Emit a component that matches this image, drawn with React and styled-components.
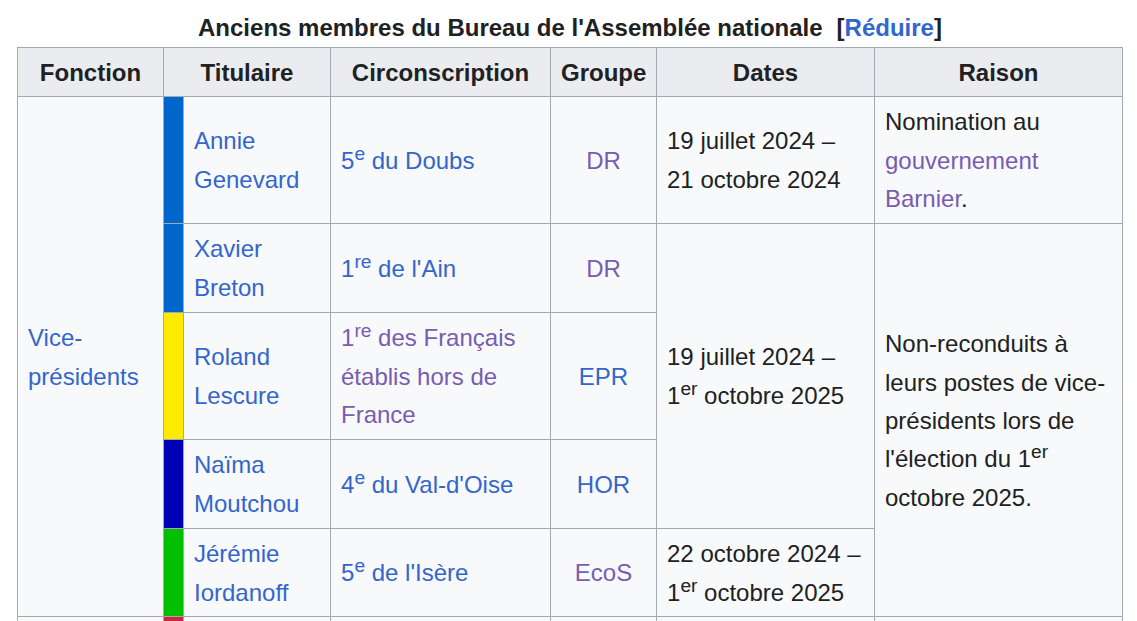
import React from "react";
import styled, { createGlobalStyle } from "styled-components";

const Global = createGlobalStyle`
  html, body {
    margin: 0;
    padding: 0;
    overflow: hidden;
    background: #ffffff;
  }
  body {
    font-family: "Liberation Sans", Arial, sans-serif;
    color: #202122;
  }
`;

const Page = styled.div`
  padding: 9px 0 0 17px;
`;

const Table = styled.table`
  border-collapse: collapse;
  table-layout: fixed;
  width: 1105px;
  background: #f8f9fa;
  border: 1px solid #a2a9b1;
  font-size: 24px;
  line-height: 1.6;
`;

const Caption = styled.caption`
  font-weight: bold;
  font-size: 24px;
  line-height: 1.6;
  padding: 0;
`;

const Toggle = styled.span`
  margin-left: 14px;
  a {
    color: #3366cc;
    text-decoration: none;
  }
`;

const HeadCell = styled.th`
  background: #eaecf0;
  border: 1px solid #a2a9b1;
  padding: 5.5px 10px 3.5px;
  text-align: center;
  font-weight: bold;
`;

const Cell = styled.td`
  border: 1px solid #a2a9b1;
  padding: 6.5px 10px 4.5px;
  vertical-align: middle;
  text-align: ${(p) => p.$align || "left"};
`;

const Strip = styled.td`
  border: 1px solid #a2a9b1;
  padding: 0;
  background: ${(p) => p.$color};
`;

const Link = styled.a`
  color: ${(p) => (p.$visited ? "#795cb2" : "#3366cc")};
  text-decoration: none;
`;

const Sup = styled.sup`
  font-size: 0.8em;
  line-height: 1;
  vertical-align: super;
`;

const widths = [146, 20, 147, 220, 106, 218, 248];

const members = [
  { color: "#0066cc", name: "Annie Genevard", circ: ["5", "e", " du Doubs"], circVisited: false, group: "DR", groupVisited: true },
  { color: "#0066cc", name: "Xavier Breton", circ: ["1", "re", " de l'Ain"], circVisited: false, group: "DR", groupVisited: true },
  { color: "#ffeb00", name: "Roland Lescure", circ: ["1", "re", " des Français établis hors de France"], circVisited: true, group: "EPR", groupVisited: false },
  { color: "#0000b4", name: "Naïma Moutchou", circ: ["4", "e", " du Val-d'Oise"], circVisited: false, group: "HOR", groupVisited: false },
  { color: "#00c000", name: "Jérémie Iordanoff", circ: ["5", "e", " de l'Isère"], circVisited: false, group: "EcoS", groupVisited: true },
];

export default function App() {
  return (
    <Page>
      <Global />
      <Table>
        <Caption>
          Anciens membres du Bureau de l'Assemblée nationale
          <Toggle>
            [<a href="#">Réduire</a>]
          </Toggle>
        </Caption>
        <colgroup>
          {widths.map((w, i) => (
            <col key={i} style={{ width: w }} />
          ))}
        </colgroup>
        <thead>
          <tr>
            <HeadCell>Fonction</HeadCell>
            <HeadCell colSpan={2}>Titulaire</HeadCell>
            <HeadCell>Circonscription</HeadCell>
            <HeadCell>Groupe</HeadCell>
            <HeadCell>Dates</HeadCell>
            <HeadCell>Raison</HeadCell>
          </tr>
        </thead>
        <tbody>
          {members.map((m, i) => (
            <tr key={m.name}>
              {i === 0 && (
                <Cell rowSpan={5}>
                  <Link href="#">Vice-présidents</Link>
                </Cell>
              )}
              <Strip $color={m.color} />
              <Cell>
                <Link href="#">{m.name}</Link>
              </Cell>
              <Cell>
                <Link href="#" $visited={m.circVisited}>
                  {m.circ[0]}
                  <Sup>{m.circ[1]}</Sup>
                  {m.circ[2]}
                </Link>
              </Cell>
              <Cell $align="center">
                <Link href="#" $visited={m.groupVisited}>
                  {m.group}
                </Link>
              </Cell>
              {i === 0 && <Cell>19 juillet 2024 – 21 octobre 2024</Cell>}
              {i === 1 && (
                <Cell rowSpan={3}>
                  19 juillet 2024 – 1<Sup>er</Sup> octobre 2025
                </Cell>
              )}
              {i === 4 && (
                <Cell>
                  22 octobre 2024 – 1<Sup>er</Sup> octobre 2025
                </Cell>
              )}
              {i === 0 && (
                <Cell>
                  Nomination au{" "}
                  <Link href="#" $visited>
                    gouvernement Barnier
                  </Link>
                  .
                </Cell>
              )}
              {i === 1 && (
                <Cell rowSpan={4}>
                  Non-reconduits à leurs postes de vice-présidents lors de
                  l'élection du 1<Sup>er</Sup> octobre 2025.
                </Cell>
              )}
            </tr>
          ))}
          <tr>
            <Cell>
              <Link href="#">Questeurs</Link>
            </Cell>
            <Strip $color="#cc2443" />
            <Cell>
              <Link href="#">Christine Pirès Beaune</Link>
            </Cell>
            <Cell>
              <Link href="#">
                2<Sup>e</Sup> du Puy-de-Dôme
              </Link>
            </Cell>
            <Cell $align="center">
              <Link href="#">SOC</Link>
            </Cell>
            <Cell>19 juillet 2024 – 1<Sup>er</Sup> octobre 2025</Cell>
            <Cell>Non-reconduite.</Cell>
          </tr>
        </tbody>
      </Table>
    </Page>
  );
}
